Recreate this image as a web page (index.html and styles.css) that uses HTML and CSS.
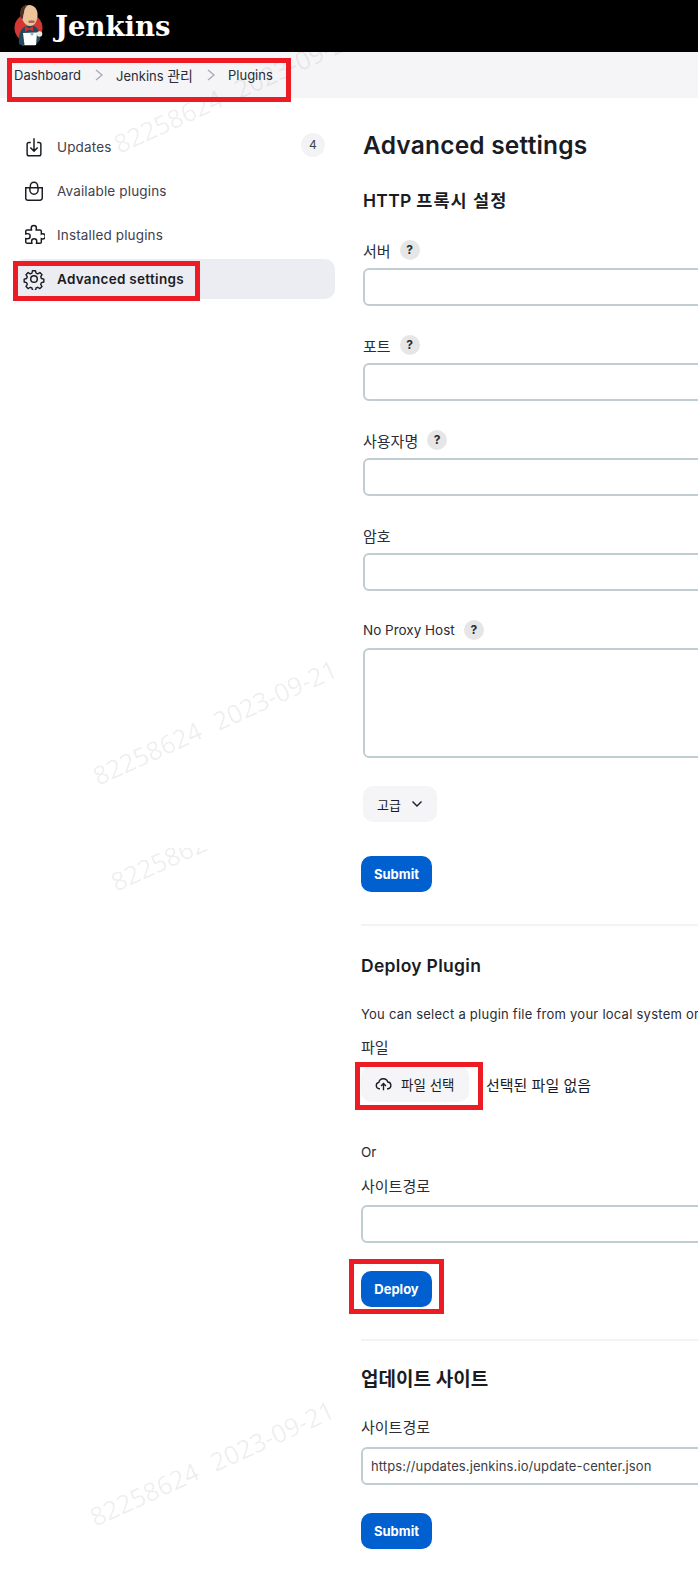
FILE: index.html
```html
<!DOCTYPE html>
<html lang="ko">
<head>
<meta charset="UTF-8" />
<meta name="viewport" content="width=device-width, initial-scale=1" />
<title>Jenkins - Advanced settings</title>
<link rel="stylesheet" href="styles.css">
</head>
<body>
<header class="topbar">
  <svg class="logo" viewBox="0 0 32 44" width="32" height="44">
    <circle cx="15.500" cy="24" r="14" fill="#d33833"/>
    <path d="M6 40 C5 30 8 24 13 22 L21 22 C26 25 28 30 27 36 L22 42 L10 42 Z" fill="#24495c"/>
    <path d="M8 10 C7 4 11 1 16 1 C22 1 25 6 24.500 12 C24 18 21 22 17 22 C13 22 10 18 9 14 Z" fill="#eec39b"/>
    <path d="M8 14 C5 7 9 1 15 1 C12 3 11 6 11 9 C10 11 10 13 10 15 Z" fill="#4a3127"/>
    <path d="M15 17 C17 16 20 16 22 17 L21 19 L16 19 Z" fill="#a86d4d"/>
    <path d="M12 22 L16 24.500 L20 22.500 L20 27 L16 25.500 L12 28 Z" fill="#e02b2b"/>
    <path d="M10 29 L24 28.500 L23 41 L11.500 41 Z" fill="#fff"/>
    <circle cx="26.500" cy="30" r="2.800" fill="#ece7de"/>
    <circle cx="19" cy="30" r="1.600" fill="#8fb4c4"/>
  </svg>
  <span class="brand">Jenkins</span>
</header>

<nav class="crumbs">
  <a href="#">Dashboard</a>
  <svg class="crumb-sep" viewBox="0 0 10 14" width="10" height="14"><path d="M2 2l6 5-6 5" fill="none" stroke="#a9a9b8" stroke-width="1.300"/></svg>
  <a href="#">Jenkins <span class="ko-crumb">관리</span></a>
  <svg class="crumb-sep" viewBox="0 0 10 14" width="10" height="14"><path d="M2 2l6 5-6 5" fill="none" stroke="#a9a9b8" stroke-width="1.300"/></svg>
  <a href="#">Plugins</a>
</nav>

<div class="layout">
  <aside class="sidebar">
    <a class="side-item" href="#">
      <svg class="side-icon" viewBox="0 0 24 24"><path d="M8.500 7H6.500a2 2 0 0 0-2 2v10.500a2 2 0 0 0 2 2h11a2 2 0 0 0 2-2V9a2 2 0 0 0-2-2h-2M8 12.500l4 4 4-4M12 2.500v14" /></svg>
      <span>Updates</span>
      <span class="badge">4</span>
    </a>
    <a class="side-item" href="#">
      <svg class="side-icon" viewBox="0 0 24 24"><path d="M3 8.500h18v11a2.500 2.500 0 0 1-2.500 2.500h-13A2.500 2.500 0 0 1 3 19.500zM8 8.500V6.500a4 4 0 0 1 8 0v2M7.500 8.500v2.500a4.500 4.500 0 0 0 9 0V8.500" /></svg>
      <span>Available plugins</span>
    </a>
    <a class="side-item" href="#">
      <svg class="side-icon" viewBox="0 0 24 24"><path d="M9 4.500a2.800 2.800 0 0 1 5.600 0c0 .8-.3 1.500-.3 2h4.200c.8 0 1.500.7 1.500 1.500v3c.5-.2 1-.3 1.500-.3a2.800 2.800 0 0 1 0 5.600c-.5 0-1-.1-1.500-.3v3.500c0 .8-.7 1.500-1.500 1.500h-3.800c0-.8.3-1.300.3-2a2.800 2.800 0 0 0-5.600 0c0 .7.300 1.200.3 2H4.500c-.8 0-1.500-.7-1.500-1.500v-3.700c.7 0 1.200.3 2 .3a2.800 2.800 0 0 0 0-5.600c-.8 0-1.300.3-2 .3V8c0-.8.7-1.500 1.500-1.500h4.800c0-.5-.3-1.200-.3-2z" /></svg>
      <span>Installed plugins</span>
    </a>
    <a class="side-item side-item-active" href="#">
      <svg class="side-icon" viewBox="0 0 24 24"><circle cx="12" cy="12" r="3.600"/><path d="M10.300 2.500h3.400l.7 2.800 1.900.8 2.500-1.500 2.400 2.400-1.500 2.500.8 1.900 2.800.7v3.400l-2.800.7-.8 1.900 1.500 2.500-2.400 2.400-2.500-1.500-1.900.8-.7 2.800h-3.400l-.7-2.800-1.900-.8-2.500 1.500-2.400-2.400 1.500-2.500-.8-1.900-2.800-.7v-3.400l2.800-.7.8-1.900-1.500-2.500 2.400-2.400 2.500 1.500 1.900-.8z" transform="translate(.600 .600) scale(.95)" stroke-linejoin="round"/></svg>
      <span>Advanced settings</span>
    </a>
  </aside>

  <main class="content">
    <h1 class="page-title">Advanced settings</h1>

    <section class="proxy">
      <h2 class="section-title">HTTP <span class="ko-title">프록시 설정</span></h2>
      <div class="field">
        <label class="field-label"><span class="ko">서버</span> <span class="help">?</span></label>
        <input class="text-input" type="text" />
      </div>
      <div class="field">
        <label class="field-label"><span class="ko">포트</span> <span class="help">?</span></label>
        <input class="text-input" type="text" />
      </div>
      <div class="field">
        <label class="field-label"><span class="ko">사용자명</span> <span class="help">?</span></label>
        <input class="text-input" type="text" />
      </div>
      <div class="field">
        <label class="field-label"><span class="ko">암호</span></label>
        <input class="text-input" type="text" />
      </div>
      <div class="field">
        <label class="field-label">No Proxy Host <span class="help">?</span></label>
        <textarea class="text-input text-area"></textarea>
      </div>
      <button class="btn-light" type="button">고급
        <svg viewBox="0 0 12 8" width="12" height="8"><path d="M1.500 1.500L6 6l4.500-4.500" fill="none" stroke="#1a1c24" stroke-width="1.400"/></svg>
      </button>
    </section>

    <button class="btn-primary submit-one" type="button">Submit</button>
    <hr class="divider divider-one" />

    <h2 class="section-title deploy-title">Deploy Plugin</h2>
    <p class="desc">You can select a plugin file from your local system or provide a URL to install a plugin from outside the central plugin repository.</p>
    <div class="plain-label file-label ko">파일</div>
    <div class="file-row">
      <button class="btn-file" type="button">
        <svg viewBox="0 0 24 24" width="17" height="17"><path d="M7 18H6a4.500 4.500 0 0 1-.6-8.900A6.500 6.500 0 0 1 18 8.500a4.800 4.800 0 0 1 .5 9.500H17M12 20v-9M8.500 14l3.500-3.500 3.500 3.500" fill="none" stroke="#1a1c24" stroke-width="1.900"/></svg>
        파일 선택
      </button>
      <span class="file-none ko">선택된 파일 없음</span>
    </div>
    <div class="plain-label or-label">Or</div>
    <div class="plain-label url-label ko">사이트경로</div>
    <input class="text-input" type="text" />
    <button class="btn-primary deploy-btn" type="button">Deploy</button>
    <hr class="divider divider-two" />

    <h2 class="section-title update-title">업데이트 사이트</h2>
    <div class="plain-label site-label ko">사이트경로</div>
    <input class="text-input site-input" type="text" value="https://updates.jenkins.io/update-center.json" />
    <button class="btn-primary submit-two" type="button">Submit</button>
  </main>
</div>

<!-- watermark -->
<div class="mark mark-one">82258624 2023-09-21</div>
<div class="mark mark-two">82258624 2023-09-21</div>
<div class="mark-clip"><div class="mark mark-three">82258624 2023-09-21</div></div>
<div class="mark mark-four">82258624 2023-09-21</div>

<!-- screenshot annotations -->
<div class="callout callout-crumbs"></div>
<div class="callout callout-side"></div>
<div class="callout callout-file"></div>
<div class="callout callout-deploy"></div>
</body>
</html>
```

FILE: styles.css
```css
html, body {
  margin: 0;
  padding: 0;
  height: 1583px;
  overflow: hidden;
  background: #fff;
}
body {
  position: relative;
  font-family: Inter, "Noto Sans CJK KR", sans-serif;
  font-size: 14px;
  color: #1a1c24;
}
a {
  color: inherit;
  text-decoration: none;
}
.ko {
  font-size: 15px;
}
.ko-crumb {
  font-size: 14px;
}
.topbar {
  position: relative;
  z-index: 2;
  height: 52px;
  background: #000;
  display: flex;
  align-items: center;
  padding-left: 13px;
}
.brand {
  margin-left: 10px;
  font-family: "DejaVu Serif", serif;
  font-weight: bold;
  font-size: 27.500px;
  color: #fff;
}
.crumbs {
  height: 46px;
  background: #f5f5f8;
  display: flex;
  align-items: center;
  padding-left: 14px;
  font-size: 13px;
  color: #2a2c36;
}
.crumb-sep {
  margin: 0 12.500px;
}
.layout {
  display: flex;
}
.sidebar {
  width: 321px;
  margin-left: 14px;
  padding-top: 29px;
  flex: none;
}
.side-item {
  display: flex;
  align-items: center;
  height: 40px;
  margin-bottom: 4px;
  padding-left: 9px;
  border-radius: 10px;
  color: #40424d;
  font-size: 13.500px;
  letter-spacing: 0.15px;
}
.side-item-active {
  background: #ecedf3;
  color: #1a1c24;
  font-weight: 600;
  letter-spacing: 0.3px;
}
.side-icon {
  width: 22px;
  height: 22px;
  margin-right: 12px;
  fill: none;
  stroke: #1a1c24;
  stroke-width: 1.600;
}
.badge {
  margin-left: auto;
  margin-right: 10px;
  margin-top: -4px;
  width: 24px;
  height: 24px;
  border-radius: 50%;
  background: #f3f3f6;
  text-align: center;
  line-height: 24px;
  font-size: 12px;
}
.content {
  width: 700px;
  margin-left: 26px;
  flex: none;
}
.page-title {
  margin: 31px 0 0 2px;
  font-size: 24.500px;
  line-height: 32px;
  font-weight: 600;
  letter-spacing: 0.2px;
}
.section-title {
  margin: 0;
  font-size: 17.500px;
  line-height: 22px;
  font-weight: 600;
  letter-spacing: 0.3px;
}
.ko-title {
  letter-spacing: 1px;
}
.proxy {
  margin: 29px 0 0 2px;
}
.proxy .section-title {
  margin-bottom: 28px;
}
.field-label {
  display: flex;
  align-items: center;
  gap: 9px;
  height: 20px;
  margin-bottom: 8px;
  font-size: 13.500px;
  color: #2a2c36;
}
.help {
  width: 20px;
  height: 20px;
  border-radius: 50%;
  background: #e6e6e6;
  text-align: center;
  font-size: 12px;
  font-weight: 700;
  line-height: 20px;
}
.text-input {
  display: block;
  box-sizing: border-box;
  width: 680px;
  height: 38px;
  margin: 0 0 29px;
  padding: 0 8px;
  border: 2px solid #c0cdd2;
  border-radius: 6px;
  background: #fff;
  font-family: inherit;
  font-size: 13px;
  color: #3a3c46;
  outline: none;
}
.text-area {
  height: 110px;
  margin-bottom: 28px;
  resize: none;
}
.site-input {
  letter-spacing: 0.1px;
}
.btn-light {
  display: flex;
  align-items: center;
  gap: 10px;
  height: 36px;
  width: 74px;
  padding: 0 0 0 14px;
  border: none;
  border-radius: 10px;
  background: #f5f5f8;
  font-family: inherit;
  font-size: 13px;
  color: #1a1c24;
}
.btn-primary {
  display: block;
  width: 71px;
  height: 36px;
  padding: 0;
  border: none;
  border-radius: 10px;
  background: #0060d0;
  color: #fff;
  font-family: inherit;
  font-size: 13px;
  font-weight: 700;
}
.submit-one {
  margin-top: 34px;
}
.divider {
  height: 2px;
  margin: 0;
  border: none;
  background: #f3f3f6;
}
.divider-one {
  margin-top: 32px;
}
.deploy-title {
  margin-top: 29px;
}
.desc {
  margin: 27px 0 0;
  height: 20px;
  line-height: 20px;
  white-space: nowrap;
  font-size: 13px;
  letter-spacing: 0.25px;
  color: #2a2c36;
}
.plain-label {
  height: 20px;
  line-height: 20px;
  color: #2a2c36;
}
.file-label {
  margin-top: 14px;
}
.file-row {
  display: flex;
  align-items: center;
  margin-top: 8px;
}
.btn-file {
  display: flex;
  align-items: center;
  gap: 9px;
  width: 108px;
  height: 36px;
  padding: 0 0 0 14px;
  border: none;
  border-radius: 10px;
  background: #f5f5f8;
  font-family: inherit;
  font-size: 13.500px;
  color: #1a1c24;
}
.file-none {
  margin-left: 17px;
}
.or-label {
  margin-top: 40px;
  font-size: 13.500px;
}
.url-label {
  margin-top: 15px;
  margin-bottom: 8px;
}
.content > .text-input {
  margin-bottom: 0;
}
.deploy-btn {
  margin-top: 28px;
}
.divider-two {
  margin-top: 32px;
}
.update-title {
  margin-top: 28px;
  font-size: 19px;
  letter-spacing: 0;
}
.site-label {
  margin-top: 27px;
  margin-bottom: 9px;
}
.submit-two {
  margin-top: 28px;
}
.callout {
  position: absolute;
  z-index: 3;
  box-sizing: border-box;
  border: 5px solid #ed1c24;
}
.callout-crumbs {
  left: 7px;
  top: 58px;
  width: 284px;
  height: 44px;
}
.callout-side {
  left: 13px;
  top: 261px;
  width: 187px;
  height: 40px;
}
.callout-file {
  left: 355px;
  top: 1062px;
  width: 128px;
  height: 48px;
}
.callout-deploy {
  left: 349px;
  top: 1259px;
  width: 95px;
  height: 55px;
}
.mark {
  position: absolute;
  white-space: nowrap;
  font-family: "Open Sans", sans-serif;
  font-size: 25.500px;
  line-height: 30px;
  word-spacing: 9px;
  color: rgba(0, 0, 0, 0.08);
  transform: rotate(-24.500deg);
  transform-origin: left center;
  pointer-events: none;
}
.mark-one {
  left: 115px;
  top: 130px;
}
.mark-two {
  left: 94px;
  top: 762px;
}
.mark-clip {
  position: absolute;
  left: 100px;
  top: 848px;
  width: 200px;
  height: 60px;
  overflow: hidden;
}
.mark-three {
  left: 12px;
  top: 20px;
}
.mark-four {
  left: 91px;
  top: 1503px;
}
```
